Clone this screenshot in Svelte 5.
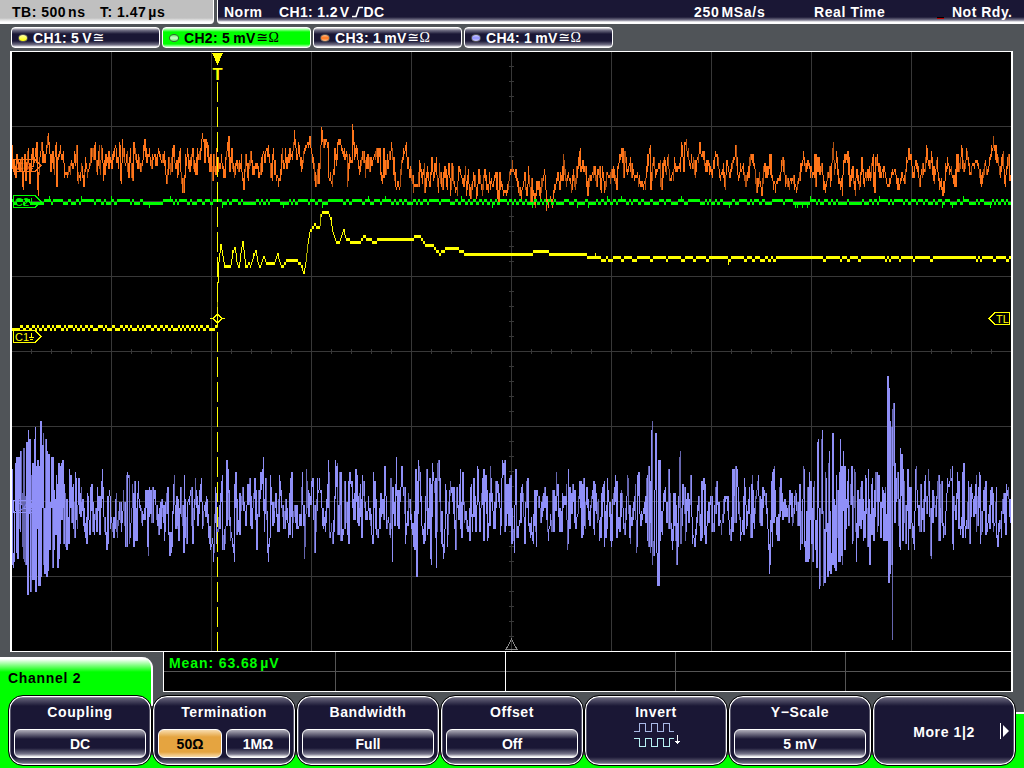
<script lang="ts">
  type Channel = { name: string; scale: string; coupling: string; led: string; active?: boolean };
  type Softkey = { label: string; options?: { text: string; on?: boolean }[]; icon?: 'invert'; more?: boolean };

  const channels: Channel[] = [
    { name: 'CH1: 5', scale: 'V', coupling: '≅', led: 'yellow' },
    { name: 'CH2: 5', scale: 'mV', coupling: '≅Ω', led: 'green', active: true },
    { name: 'CH3: 1', scale: 'mV', coupling: '≅Ω', led: 'orange' },
    { name: 'CH4: 1', scale: 'mV', coupling: '≅Ω', led: 'blue' },
  ];

  const softkeys: Softkey[] = [
    { label: 'Coupling', options: [{ text: 'DC' }] },
    { label: 'Termination', options: [{ text: '50Ω', on: true }, { text: '1MΩ' }] },
    { label: 'Bandwidth', options: [{ text: 'Full' }] },
    { label: 'Offset', options: [{ text: 'Off' }] },
    { label: 'Invert', icon: 'invert' },
    { label: 'Y−Scale', options: [{ text: '5 mV' }] },
    { label: 'More 1|2', more: true },
  ];

  // samples as "x y" pairs in screen units
  const ch1 = `217 328 218 285 219 262 221 245 223 258 225 270 226 266 231 266 233 252 235 247 237 262 239 270 241 253 243 242
    246 268 249 263 251 266 254 255 256 251 258 262 260 267 264 257 266 262 270 264 275 262 278 254 280 264 283 266 287 260
    297 260 299 263 302 266 304 275 306 262 308 245 310 232 313 228 315 224 316 227 320 227 321 216 323 212 328 212 331 219
    333 232 336 242 340 242 342 236 344 231 346 238 351 242 361 242 364 236 368 239 375 242 378 240 410 240 415 237 420 237
    425 244 432 245 438 252 441 254 443 250 448 249 456 248 460 250 465 254 500 255 512 254 530 253 545 251 552 254 585 255
    592 257`;

  const ch3 = `12 145 13 165 15 177 17 158 19 170 21 160 22 173 23 187 25 158 26 175 28 152 30 178 32 156 34 165 36 150 37 165
    38 190 40 158 42 148 44 165 47 150 49 142 51 165 53 153 54 171 56 145 57 187 58 160 60 153 63 157 65 172 68 175 71 165
    73 171 76 154 78 174 80 180 82 168 84 181 86 165 88 173 90 166 92 150 94 160 95 148 97 172 99 152 100 170 102 150
    104 175 106 156 108 164 109 153 112 169 114 152 116 148 118 165 120 151 121 181 123 148 125 165 127 160 128 173 130 157
    133 181 134 151 137 165 139 157 141 173 143 160 145 142 147 163 149 154 152 163 155 155 156 163 159 151 162 165 164 157
    167 184 169 157 171 172 173 148 175 165 177 160 178 175 180 153 181 172 184 195 186 160 188 155 190 168 193 154 196 175
    198 154 200 160 202 139 204 140 205 157 207 142 209 163 210 172 211 154 213 181 214 155 216 177 217 157 218 172 222 163
    225 175 226 160 228 145 230 171 232 155 234 172 237 160 239 173 241 163 243 180 244 187 246 154 248 180 251 151 253 170
    257 163 260 177 262 157 265 154 268 148 270 163 272 177 273 154 276 175 280 183 282 154 284 171 286 157 288 165 290 150
    292 157 295 139 297 160 299 150 302 170 304 155 306 147 309 142 311 148 314 165 316 189 318 170 319 186 321 147 322 133
    324 150 326 140 328 143 329 178 332 182 334 172 335 148 337 162 338 147 340 142 343 155 345 160 347 156 348 183 350 157
    352 165 353 130 355 157 356 148 358 160 360 172 364 152 366 170 368 155 370 172 372 163 374 157 377 148 378 160 380 149
    381 172 383 180 384 149 386 175 388 163 390 157 392 148 394 175 396 189 400 187 402 165 404 154 406 148 408 165 411 178
    414 188 418 189 420 168 422 178 424 170 425 195 427 173 430 187 432 163 434 180 436 163 438 188 440 172 443 190 445 168
    447 187 449 167 451 189 452 165 454 185 457 190 459 172 463 180 465 175 467 188 468 176 471 200 474 175 477 193 479 175
    482 190 485 171 487 190 490 182 493 188 496 172 498 200 500 180 503 190 507 193 510 175 512 170 516 178 520 198 523 187
    525 176 527 197 529 175 531 202 532 185 535 205 537 182 540 197 542 180 545 175 547 207 550 200 552 203 555 190 558 178
    560 185 562 176 564 160 566 182 568 175 570 180 572 190 574 175 576 185 577 175 580 151 581 172 584 166 586 175 588 198
    590 176 593 175 594 167 597 182 599 170 601 187 603 173 605 190 607 173 610 178 612 170 616 185 618 170 620 160 622 154
    624 173 625 152 627 173 630 165 632 178 636 175 638 180 642 189 645 185 647 172 649 155 650 151 651 190 653 163 656 175
    660 165 661 187 664 160 666 173 668 160 670 180 673 175 675 163 677 172 680 168 682 148 684 165 685 142 688 155 690 165
    693 163 695 175 697 160 700 152 703 157 706 172 709 163 712 175 715 157 717 155 720 178 723 170 725 189 727 165 730 175
    733 160 735 157 736 145 738 177 741 172 743 170 746 187 748 173 751 154 753 163 755 170 757 195 759 180 762 192 764 168
    766 178 769 170 770 155 772 180 776 186 779 180 781 172 783 157 785 175 788 188 791 178 794 185 797 190 799 178 801 165
    804 160 806 172 808 160 811 172 814 175 815 154 816 183 818 163 820 170 822 163 824 190 827 183 829 175 831 180 833 150
    835 170 837 157 839 180 842 189 844 163 846 155 848 163 850 188 852 173 855 190 857 170 860 189 862 157 864 183 868 170
    870 180 873 157 874 189 876 157 880 178 884 167 887 185 889 189 892 175 895 170 899 190 902 178 905 185 907 163 910 154
    913 175 916 165 920 183 923 165 925 173 927 155 930 170 932 157 934 178 937 165 939 180 943 196 946 173 948 165 951 173
    955 187 957 155 959 172 962 150 964 172 967 154 970 175 973 165 977 160 981 182 985 165 988 173 991 157 994 145 996 160
    998 163 1001 173 1003 155 1005 183 1008 158 1010 178 1011 175`;

  const ch4 = `12 484 12.5 565 14 553 16 469 17 555 18 457 20 529 21 451 23 547 24 448 25 553 27 442 28 583 29 439 31 586 32 475
    33 580 35 439 36 592 37 472 39 586 40.5 421 41 571 43 445 44 565 46 451 47 571 48.5 454 50 547 52 457 52.5 562 54 493
    56 535 57 484 58 559 59 475 60.5 544 62 472 64 544 65 493 66 538 67 499 69 535 70 475 72 523 73 493 74 529 76 478 77 517
    79 493 80 508 82 499 84 517 86 532 88 505 90 535 91 490 93 532 95 514 97 529 98 499 100 523 102 481 104 517 107 541
    108 496 110 496 111 517 114 538 116 499 117 532 120 502 122 523 124 502 126 547 127 478 129 475 130 538 133 493 134 538
    135 484 136 541 138 493 140 505 144 520 147 490 148 544 150 492 152 523 153 490 156 505 159 535 161 502 163 517 165 532
    167 496 170 553 172 541 174 484 176 526 177 500 179 541 181 487 184 547 184.5 484 186 532 188 502 191 496 192.5 541
    194 520 196 490 198 526 201 490 203 517 207 499 210 544 213 544 214 553 216 493 217 544 222 481 223 550 226 526 227 469
    229 520 234 553 235 484 237 535 239 529 240 493 243 505 246 517 249 484 251 526 255 490 257 538 259 499 263 469
    264.5 532 266 478 268 553 270 538 271 487 273 517 276 505 278 532 280 487 284 529 286 499 289 535 291 478 292.5 526
    295 505 297 529 301 526 302 487 305 547 307 481 309 517 313 478 315 553 318 490 321 490 323 526 325 526 329 472 330 535
    334 532 336 466 337.5 478 338 535 340 478 341 541 344 529 345 487 348.5 544 349 484 352 481 354 520 356 481 358 523
    360.5 487 362 526 363 484 366 520 369 509 373 544 374 481 376 530 379 529 381 505 384 520 385 472 387 520 390 526
    391 478 392.5 553 393 487 395 526 396.5 466 397.5 526 400 493 402 481 404 493 406 535 409 499 413 532 414 544 416 481
    417 565 419 466 420 478 422 526 425 541 427 469 428 529 430 490 431 559 433 478 435 484 436.5 568 438 463 442 544
    444.5 547 446 496 448 535 450 496 453 487 456 550 457 496 459 520 460.5 475 461 529 463 475 464.5 517 469 533 471 487
    472.5 532 474 487 476 532 478 481 480 523 483 478 484 541 485 487 488.5 538 491 478 494 529 496 481 499 493 501 526
    502 478 504.5 460 505 526 507 484 509 526 510 481 512 535 514 541 516 472 517 538 520 523 522 490 525 532 527 481
    529 523 531 529 533 541 535 490 536.5 541 537 490 541 517 546 496 548 532 552 520 553 490 554 523 557 487 561 532
    563 499 566 496 568 544 568.5 478 570 529 573 484 575 523 578 514 580 481 582 532 583 484 585 517 587 487 589 520
    593 490 594 529 596 493 600 532 603 493 604.5 481 605 538 608 490 611 529 612.5 541 613 505 616 481 616.5 529 619 529
    622 493 624 523 625 535 628 478 630 532 635 496 637 547 638 478 640 514 645 514 647 478 648 541 648.5 466 651 547
    652 430 652.5 565 654 544 656 439 657 553 658 580 659 460 660 463 661 532 665 493 668 523 669 469 671 529 672.5 550
    674 493 676.5 556 679 510 680 460 681 544 683 484 686 532 687 499 689 523 691 487 692.5 535 695 541 699 496 701 532
    702 481 704 490 705 535 708 523 711 496 712 529 714 532 715 514 716 487 718 502 719 526 722 523 725 496 727 500 730 532
    732 529 733 469 735 523 736 478 738 487 741 535 743 532 744.5 478 747 523 749 499 751 529 752 484 754 523 756 496
    758 484 761 526 763 487 765 493 767 514 770 562 772 481 772.5 547 774 478 776 517 778 541 780 487 784 517 785 502
    788 517 790 493 791 493 793 523 796 499 798 526 800 493 801 544 804.5 469 805 544 806 562 808 487 809 559 810 481
    812.5 562 813 544 814 490 816.5 568 818 442 820 577 822 439 824 583 826 478 828 568 829 463 831 574 832 565 833 439
    835 568 836.5 475 839 562 840.5 439 842 556 844 466 845 538 848 481 849 526 852 466 853 541 855 478 856.5 562 858 493
    860 526 861 487 864 538 866 484 868 547 868.5 469 870 565 872 484 873 529 876 472 878 523 879 475 881 529 883 490
    884 541 885 493 887 541 888 391 888.5 583 890 538 891 427 892.5 637 893 409 895 523 897 484 899 514 900.5 550 901 454
    903 535 904 481 906 544 908 481 908.5 550 910 490 912 523 914 544 916 478 918 505 920 532 921 496 923 520 925 481
    927 514 929 481 931 556 933 493 936 517 938 484 939 541 941 487 942 523 945 529 947 493 949 485 952 478 953 544 954 496
    956 517 958 481 959 526 962 529 963 472 964 526 967 529 969 487 970 544 972 493 975 514 976.5 475 977 526 980 475
    981 535 985 490 986 535 989 520 991 490 993 523 995 523 996.5 493 997 538 1001 526 1003 500 1004 493 1006 535 1007 490
    1010 505 1011 523`;

  let seed = 41;
  const rand = () => (seed = (seed * 16807) % 2147483647) / 2147483647;

  // vertical resolution of the display is three pixels per ADC step
  const snap = (y: number) => Math.round((y - 1) / 3) * 3 + 1;

  // one vertical run per pixel column, split into bright and dim columns;
  // noise is the height of the random run laid over each column
  function columns(src: string, noise: number, wide: number) {
    const n = src.trim().split(/\s+/).map(Number);
    const pts: number[][] = [];
    for (let i = 0; i < n.length; i += 2) pts.push([n[i], n[i + 1]]);
    const last = pts[pts.length - 1][0];
    let bright = '', dim = '', k = 0;
    const at = (x: number) => {
      while (k < pts.length - 2 && pts[k + 1][0] < x) k++;
      const [x0, y0] = pts[k], [x1, y1] = pts[k + 1];
      return y0 + (y1 - y0) * Math.min(1, Math.max(0, (x - x0) / (x1 - x0)));
    };
    for (let x = pts[0][0]; x < last; x++) {
      const ys = [at(x), ...pts.filter((p) => p[0] > x && p[0] < x + 1).map((p) => p[1])];
      ys.push(at(x + 1));
      const lo = Math.min(...ys), hi = Math.max(...ys);
      const shift = (rand() - 0.5) * noise;
      const top = snap(Math.min(lo, lo + shift) - 1), end = snap(Math.max(hi, hi + shift) - 1);
      const bottom = Math.max(end, top + 3);
      const d = `M${x + 0.5} ${top}V${bottom}`;
      if (bottom - top > 8 && rand() < 0.28) dim += d;
      else bright += d;
      if (bottom - top > 8 && rand() < wide && x + 2 < last) bright += `M${x + 1.5} ${top}V${bottom}`;
    }
    return { bright, dim };
  }

  // idle trace toggling between two neighbouring steps
  function flat(from: number, to: number, y: number, toggle: number, back: number, spike = 0) {
    let d = '', low = false;
    for (let x = from; x < to;) {
      const len = Math.min(to - x, 2 + Math.floor(rand() * 2));
      low = low ? rand() > back : rand() < toggle;
      d += `M${x} ${(low ? y + 3 : y) + 1.5}h${len}`;
      if (rand() < spike) d += `M${x} ${(low ? y + 6 : y - 3) + 1.5}h1`;
      x += len;
    }
    return d;
  }

  const traces = [
    { color: 'blue', ...columns(ch4, 26, 0.4) },
    { color: 'orange', ...columns(ch3, 16, 0.2) },
    { color: 'yellow', ...columns(ch1, 0, 0) },
  ];
  const idleYellow = flat(12, 217, 325, 0.85, 0.85);
  const tailYellow = flat(592, 1011, 256, 0.25, 0.9, 0.02);
  const green = flat(12, 1011, 199, 0.6, 0.6, 0.09);

  const markers = [
    { id: 'C4', y: 506, color: 'blue' },
    { id: 'C3', y: 165, color: 'orange' },
    { id: 'C2', y: 201, color: 'green' },
    { id: 'C1', y: 336, color: 'yellow' },
  ];

  const range = (n: number) => Array.from({ length: n }, (_, i) => i);
</script>

<div class="scope">
  <header class="status">
    <div class="timebase"><span class="tb">TB: 500<i></i>ns</span><span>T: 1.47<i></i>µs</span></div>
    <div class="trigger">
      <span class="mode">Norm</span>
      <span class="source">CH1: 1.2<i></i>V<svg class="edge" width="11" height="12" viewBox="0 0 11 12"><path d="M0 10.5H4L7 1.5H11" /></svg>DC</span>
      <span class="rate">250<i></i>MSa/s</span>
      <span class="acq">Real Time</span>
      <span class="cursor"></span>
      <span class="ready">Not Rdy.</span>
    </div>
  </header>

  <nav class="channels">
    {#each channels as c}
      <div class="channel" class:active={c.active}>
        <span class="led {c.led}"></span>
        <span>{c.name}<i></i>{c.scale}</span><span class="sym">{c.coupling}</span>
      </div>
    {/each}
  </nav>

  <main class="display">
    <svg width="1003" height="602" viewBox="10 51 1003 602" shape-rendering="crispEdges">
      <rect x="10" y="51" width="1003" height="602" fill="#000" />
      <g class="grid">
        {#each range(9) as i}<path d="M{111.5 + i * 100} 52V652" />{/each}
        {#each range(7) as i}<path d="M12 {126.5 + i * 75}H1011" />{/each}
        {#each range(39) as i}<path d="M509 {66.5 + i * 15}h5" />{/each}
        {#each range(49) as i}<path d="M{31.5 + i * 20} 349v5" />{/each}
      </g>
      {#each traces as t}
        <path class="trace {t.color} dim" d={t.dim} />
        <path class="trace {t.color}" d={t.bright} />
      {/each}
      <path class="idle green" d={green} />
      <path class="idle yellow" d={idleYellow} />
      <path class="idle yellow" d={tailYellow} />

      <path class="cursor-line" d="M217.5 82V652" />
      <path d="M212 53H223L217.5 65Z" fill="#ff0" />
      <text class="t-mark" x="217.5" y="80">T</text>
      <path class="mark yellow" d="M210 318.5H213L217.5 314L222 318.5L217.5 323L213 318.5M222 318.5H225" />

      {#each markers as m}
        <g class="mark {m.color}">
          <path d="M13.5 {m.y - 5.5}H35L41 {m.y + 0.5}L35 {m.y + 6.5}H13.5Z" />
          <text x="15" y={m.y + 4.5}>{m.id}</text>
          <path d="M31.5 {m.y - 3}v5M29 {m.y + 1.5}h5M30 {m.y + 3.5}h3" />
        </g>
      {/each}
      <g class="mark yellow">
        <path d="M1009.5 312.5H995L989 318.5L995 324.5H1009.5Z" />
        <text x="996" y="322.5">TL</text>
      </g>
      <path class="origin" d="M511.5 639L506 649.5H517Z" />

      <g class="frame">
        <path d="M10 51.5H1013M10 651.5H1013" />
        <path d="M11 51V652M1012 51V653" stroke-width="2" />
      </g>
    </svg>
  </main>

  <section class="results">
    <div class="menu-tab">Channel 2</div>
    <div class="measure">
      <div class="cell wide">Mean: 63.68<i></i>µV</div>
      <div class="cell white"></div>
      <div class="cell"></div>
      <div class="cell"></div>
      <div class="cell last"></div>
    </div>
  </section>

  <footer class="softkeys">
    {#each softkeys as k}
      <button class="key" class:more={k.more}>
        <span class="label">{k.label}</span>
        {#if k.options}
          <span class="options">
            {#each k.options as o}<span class="option" class:on={o.on}>{o.text}</span>{/each}
          </span>
        {/if}
        {#if k.icon}
          <svg class="invert" width="48" height="28" viewBox="0 0 48 28" shape-rendering="crispEdges">
            <path stroke="#a9b9e6" d="M0 10.5H5.5V2.5H11.5V10.5H17.5V2.5H23.5V10.5H29.5V2.5H35.5V10.5H40" />
            <path stroke="#b9f3f5" d="M0 17.5H5.5V25.5H11.5V17.5H17.5V25.5H23.5V17.5H29.5V25.5H35.5V17.5H40" />
            <path stroke="#fff" d="M43.5 14V23M41 20.5h5M42 21.5h3" />
          </svg>
        {/if}
        {#if k.more}
          <svg class="arrow" width="9" height="16" viewBox="0 0 9 16"><path d="M.5 0V16" stroke="#fff" /><path d="M3 2L9 8L3 14Z" fill="#fff" /></svg>
        {/if}
      </button>
    {/each}
  </footer>
</div>

<style>
  :global(body) { margin: 0; background: #505458; }
  .scope {
    width: 1024px; height: 768px; overflow: hidden; display: flex; flex-direction: column;
    background: #505458; color: #fff; font: bold 14px/16px "Liberation Sans", Arial, sans-serif;
  }
  i { display: inline-block; width: 2px; }

  /* status line */
  .status { display: flex; gap: 3px; height: 24px; flex: none; }
  .timebase {
    width: 214px; box-sizing: border-box; padding: 4px 0 0 12px; color: #000; white-space: nowrap; letter-spacing: .5px;
    background: linear-gradient(#c0c0c0 18px, #fff 22px); border-right: 1px solid #fff; border-radius: 0 0 4px 0;
  }
  .tb { display: inline-block; width: 88px; }
  .trigger {
    flex: 1; display: flex; padding-top: 4px; white-space: nowrap; border-left: 1px solid #fff; border-radius: 0 0 0 4px;
    background: linear-gradient(#1a1735 17px, #77758a 20px, #fff 22px);
  }
  .mode { width: 55px; padding-left: 6px; box-sizing: border-box; margin-right: 6px; letter-spacing: .5px; }
  .source { width: 415px; letter-spacing: .35px; }
  .edge { margin: 0 1px 0 2px; vertical-align: -1px; }
  .edge path { fill: none; stroke: #fff; stroke-width: 1.7; }
  .rate { width: 120px; letter-spacing: .7px; }
  .acq { width: 123px; letter-spacing: .6px; }
  .cursor { width: 7px; height: 1px; margin-top: 13px; background: #c00000; border-top: 1px solid #000; }
  .ready { margin-left: 8px; letter-spacing: .5px; }

  /* channel tabs */
  .channels { display: flex; gap: 2px; height: 24px; flex: none; padding: 3px 0 0 11px; }
  .channel {
    width: 149px; height: 21px; box-sizing: border-box; display: flex; align-items: center; padding: 0 0 0 6px; white-space: nowrap;
    letter-spacing: .3px; border: 1px solid #fff; border-radius: 4px;
    background: linear-gradient(#eee, #77758a 2px, #1a1735 6px, #1a1735 13px, #77758a 17px, #fff);
  }
  .channel i { width: 3px; }
  .channel.active { color: #000; background: linear-gradient(#efe, #0f0 4px, #0f0 16px, #cfc); }
  .led { width: 8px; height: 6px; border: 1px solid #555; border-radius: 50%; margin-right: 5px; }
  .led.yellow { background: linear-gradient(#ffa, #ff0); }
  .led.green { background: linear-gradient(#6e6, #cfc, #6e6); border-color: #363; }
  .led.orange { background: linear-gradient(#fb8, #ff751a, #fb8); }
  .led.blue { background: linear-gradient(#ccf, #9090ff, #ccf); }
  .sym { font: 14px/14px "Liberation Serif", "DejaVu Sans", serif; margin-left: 1px; }

  /* waveform area */
  .display { height: 601px; flex: none; padding-left: 10px; overflow: hidden; }
  .display svg { display: block; }
  .grid { fill: none; stroke: #383838; }
  .trace, .idle, .mark, .origin, .cursor-line, .frame { fill: none; stroke-width: 1; }
  .idle { stroke-width: 3; }
  .yellow { stroke: #ff0; }
  .green { stroke: #0f0; }
  .orange { stroke: #ff751a; }
  .blue { stroke: #9090f8; }
  .dim { opacity: .7; }
  .cursor-line { stroke: #ff0; stroke-dasharray: 20 5; }
  .mark text { stroke: none; font: 11px "Liberation Sans", Arial, sans-serif; }
  .mark.yellow text { fill: #ff0; }
  .mark.green text { fill: #0f0; }
  .mark.orange text { fill: #ff751a; }
  .mark.blue text { fill: #9090f8; }
  .t-mark { fill: #ff0; text-anchor: middle; font: bold 16.5px "Liberation Sans", Arial, sans-serif; }
  .origin { stroke: #888; }
  .frame { stroke: #fff; }

  /* measurement results */
  .results { display: flex; height: 40px; flex: none; }
  .menu-tab {
    width: 153px; height: 40px; margin: 5px 10px -5px 0; flex: none; box-sizing: border-box; padding: 13px 0 0 8px; color: #000;
    letter-spacing: .7px; border-right: 2px solid #fff; border-radius: 0 11px 0 0; background: linear-gradient(#fff, #fff 2px, #0f0 15px);
  }
  .measure {
    width: 850px; height: 40px; box-sizing: border-box; display: flex; border: solid #fff; border-width: 0 2px 1px 1px;
    background: linear-gradient(#555, #555) 0 19px / 100% 1px no-repeat #000;
  }
  .cell { width: 170px; box-sizing: border-box; border-right: 1px solid #555; }
  .cell.wide { width: 172px; padding: 3px 0 0 5px; letter-spacing: .9px; color: #0f0; white-space: nowrap; }
  .cell.white { border-color: #fff; }
  .cell.last { flex: 1; border: 0; }

  /* softkey row */
  .softkeys {
    display: flex; flex: 1; padding: 3px 0 0 8px;
    background:
      linear-gradient(#0f0, #0f0) 0 0 / 151px 100% no-repeat,
      linear-gradient(#fff, #fff) 151px 0 / 2px 14px no-repeat,
      linear-gradient(#505458 20px, #fff 20px, #fff 22px, #0f0 22px) 1015px 0 / 9px 100% no-repeat,
      linear-gradient(#505458 63px, #0f0 63px);
  }
  .key {
    position: relative; width: 144px; height: 71px; flex: none; box-sizing: border-box; display: flex; flex-direction: column; align-items: center;
    margin: 0; padding: 8px 0 0; border: 1px solid #000; border-radius: 15px; color: #fff; font: inherit; letter-spacing: .6px;
    box-shadow: inset 0 0 0 1.3px #fff;
    background: linear-gradient(#77758a, #1a1735 10px, #1a1735 61px, #8a889a);
  }
  .label { height: 16px; margin-bottom: 9px; }
  .options { display: flex; gap: 4px; width: 132px; }
  .option {
    flex: 1; height: 29px; box-sizing: border-box; padding-top: 6px; border: 1px solid #fff; border-radius: 6px; letter-spacing: 0;
    background: linear-gradient(#b0aeba, #1a1735 9px, #1a1735 18px, #77758a 24px, #fff);
  }
  .option.on { color: #000; background: linear-gradient(#f8dcae, #e5a440 7px, #e5a440 22px, #f8dcae); }
  .invert { fill: none; margin: -8px 0 0 4px; }
  .more { padding-top: 28px; }
  .arrow { position: absolute; right: 6px; top: 27px; }
</style>
